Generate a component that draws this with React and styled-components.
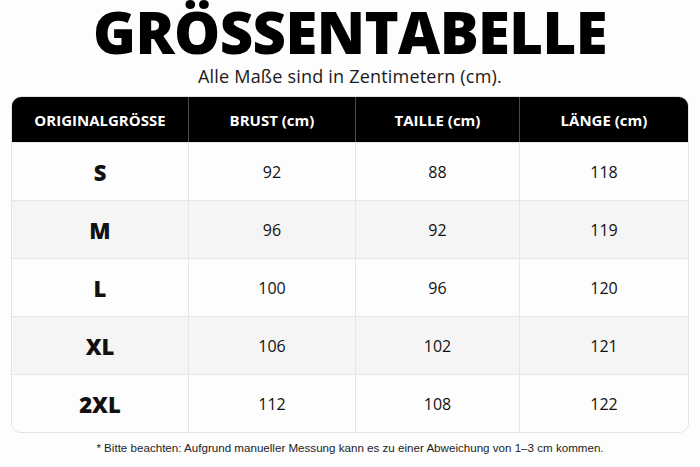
import React from "react";
import styled, { createGlobalStyle } from "styled-components";

const GlobalStyle = createGlobalStyle`
  html, body {
    margin: 0;
    padding: 0;
    background: #fdfdfd;
  }
  body {
    font-family: "Open Sans", "Liberation Sans", sans-serif;
    color: #111;
  }
`;

const Page = styled.div`
  width: 700px;
  height: 467px;
  display: flex;
  flex-direction: column;
  align-items: center;
  box-sizing: border-box;
  padding: 0 11px;
`;

const Title = styled.h1`
  margin: 0;
  font-family: "Open Sans", sans-serif;
  font-weight: 800;
  font-size: 58px;
  line-height: 64px;
  letter-spacing: -0.6px;
  color: #000;
`;

const Subtitle = styled.p`
  margin: 0 0 8px;
  font-size: 18px;
  line-height: 24px;
  letter-spacing: 0.2px;
  color: #1a1a1a;
`;

const Table = styled.div`
  width: 100%;
  border: 1px solid #e3e3e3;
  border-radius: 10px;
  overflow: hidden;
  box-sizing: border-box;
`;

const Row = styled.div`
  display: grid;
  grid-template-columns: 176px 167px 164px 1fr;
  height: ${({ $head }) => ($head ? "45px" : "58px")};
  background: ${({ $head, $alt }) => ($head ? "#000" : $alt ? "#f5f5f5" : "#fdfdfd")};
  border-top: ${({ $head }) => ($head ? "none" : "1px solid #e6e6e6")};
  box-sizing: border-box;
`;

const Cell = styled.div`
  display: flex;
  align-items: center;
  justify-content: center;
  border-left: 1px solid ${({ $head }) => ($head ? "#4a4a4a" : "#e6e6e6")};
  &:first-child {
    border-left: none;
  }
  color: ${({ $head }) => ($head ? "#fff" : "#111")};
  font-size: ${({ $head, $size }) => ($head ? "15px" : $size ? "22px" : "16px")};
  font-weight: ${({ $head, $size }) => ($head ? 700 : $size ? 800 : 400)};
`;

const Note = styled.p`
  margin: 8px 0 0;
  font-family: "Liberation Sans", Arial, sans-serif;
  font-size: 11.6px;
  color: #222;
`;

const headers = ["ORIGINALGRÖSSE", "BRUST (cm)", "TAILLE (cm)", "LÄNGE (cm)"];

const rows = [
  ["S", 92, 88, 118],
  ["M", 96, 92, 119],
  ["L", 100, 96, 120],
  ["XL", 106, 102, 121],
  ["2XL", 112, 108, 122],
];

export default function App() {
  return (
    <>
      <GlobalStyle />
      <Page>
        <Title>GRÖSSENTABELLE</Title>
        <Subtitle>Alle Maße sind in Zentimetern (cm).</Subtitle>
        <Table>
          <Row $head>
            {headers.map((h) => (
              <Cell key={h} $head>
                {h}
              </Cell>
            ))}
          </Row>
          {rows.map((r, i) => (
            <Row key={r[0]} $alt={i % 2 === 1}>
              {r.map((v, j) => (
                <Cell key={j} $size={j === 0}>
                  {v}
                </Cell>
              ))}
            </Row>
          ))}
        </Table>
        <Note>
          * Bitte beachten: Aufgrund manueller Messung kann es zu einer Abweichung von 1–3 cm kommen.
        </Note>
      </Page>
    </>
  );
}
